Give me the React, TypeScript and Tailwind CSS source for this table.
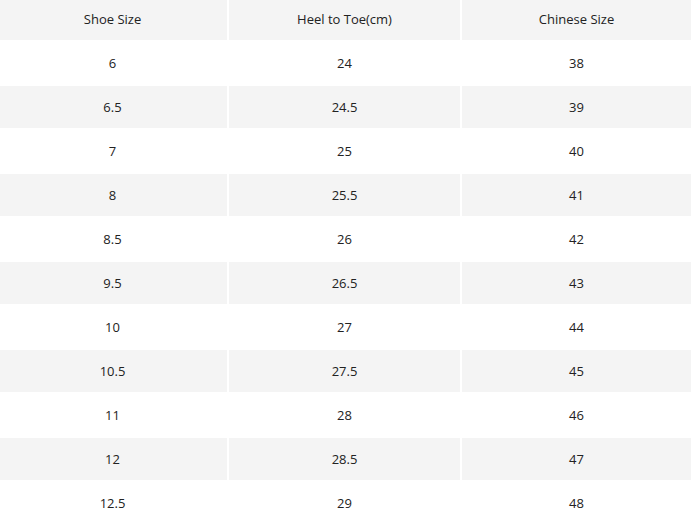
const rows = [
  ["6", "24", "38"],
  ["6.5", "24.5", "39"],
  ["7", "25", "40"],
  ["8", "25.5", "41"],
  ["8.5", "26", "42"],
  ["9.5", "26.5", "43"],
  ["10", "27", "44"],
  ["10.5", "27.5", "45"],
  ["11", "28", "46"],
  ["12", "28.5", "47"],
  ["12.5", "29", "48"],
];

export default function App() {
  return (
    <div className="w-[691px] h-[526px] overflow-hidden bg-white font-['Open_Sans',sans-serif] text-[13px] text-[#222]">
      <div className="-ml-[2px] -mt-[2px] grid grid-cols-[229px_231px_229px] gap-[2px]">
        {["Shoe Size", "Heel to Toe(cm)", "Chinese Size"].map((h) => (
          <div key={h} className="h-[42px] pt-[2px] flex items-center justify-center bg-[#f4f4f4]">
            {h}
          </div>
        ))}
        {rows.map((r, i) =>
          r.map((c, j) => (
            <div
              key={`${i}-${j}`}
              className={
                i % 2 === 1
                  ? "h-[42px] pt-[2px] flex items-center justify-center bg-[#f4f4f4]"
                  : "h-[42px] pt-[2px] flex items-center justify-center bg-white"
              }
            >
              {c}
            </div>
          ))
        )}
      </div>
    </div>
  );
}
